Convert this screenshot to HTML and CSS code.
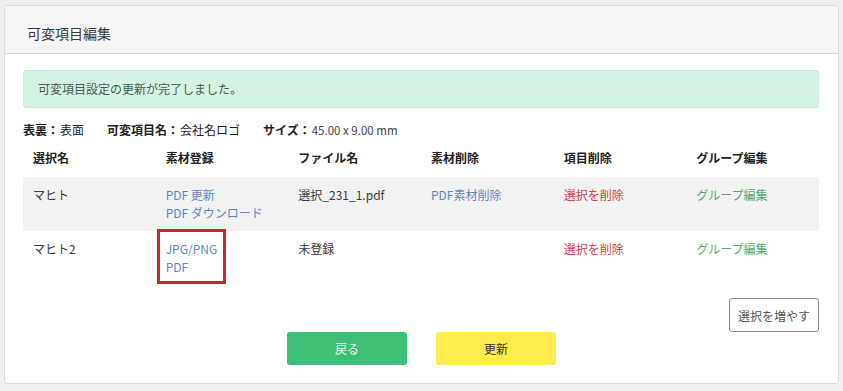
FILE: index.html
```html
<!DOCTYPE html>
<html lang="ja">
<head>
<meta charset="utf-8">
<title>可変項目編集</title>
<link rel="stylesheet" href="styles.css">
</head>
<body>
<div class="card">
  <div class="card-header">可変項目編集</div>
  <div class="card-body">
    <div class="alert">可変項目設定の更新が完了しました。</div>
    <div class="info">
      <span class="info-item"><b>表裏：</b>表面</span>
      <span class="info-item"><b>可変項目名：</b>会社名ロゴ</span>
      <span class="info-item"><b>サイズ：</b><span class="size">45.00 x 9.00 mm</span></span>
    </div>
    <table class="items">
      <thead>
        <tr>
          <th>選択名</th>
          <th>素材登録</th>
          <th>ファイル名</th>
          <th>素材削除</th>
          <th>項目削除</th>
          <th>グループ編集</th>
        </tr>
      </thead>
      <tbody>
        <tr class="striped">
          <td>マヒト</td>
          <td><a class="link">PDF 更新</a><br><a class="link">PDF ダウンロード</a></td>
          <td>選択_231_1.pdf</td>
          <td><a class="link">PDF素材削除</a></td>
          <td><a class="danger">選択を削除</a></td>
          <td><a class="success">グループ編集</a></td>
        </tr>
        <tr>
          <td>マヒト2</td>
          <td class="marked"><a class="link">JPG/PNG</a><br><a class="link">PDF</a><span class="highlight"></span></td>
          <td>未登録</td>
          <td></td>
          <td><a class="danger">選択を削除</a></td>
          <td><a class="success">グループ編集</a></td>
        </tr>
      </tbody>
    </table>
    <div class="add-row">
      <button class="btn-outline">選択を増やす</button>
    </div>
    <div class="actions">
      <button class="btn btn-back">戻る</button>
      <button class="btn btn-update">更新</button>
    </div>
  </div>
</div>
</body>
</html>
```

FILE: styles.css
```css
* { box-sizing: border-box; }
html, body {
  margin: 0;
  padding: 0;
  background: #efefef;
}
body {
  padding: 5px 4px 0 4px;
  font-family: "Noto Sans CJK JP", "Noto Sans", sans-serif;
  font-size: 12px;
  line-height: 18px;
  color: #3a3a3a;
}
.card {
  width: 835px;
  background: #fff;
  border: 1px solid #dcdcdc;
  border-radius: 3px;
}
.card-header {
  background: #f5f5f5;
  border-bottom: 1px solid #d8d8d8;
  padding: 17px 22px 10px 22px;
  font-size: 14px;
  line-height: 20px;
  color: #3a3a3a;
}
.card-body {
  padding: 16px 19px 18px 18px;
}
.alert {
  background: #d5f2e3;
  border: 1px solid #c6ebd7;
  border-radius: 3px;
  padding: 9px 14px;
  color: #4b5a52;
  line-height: 18px;
}
.info {
  margin-top: 13px;
  display: flex;
  color: #222;
}
.info-item { margin-right: 23px; }
.info-item b { font-weight: 700; margin-right: 1px; }
.size { font-size: 11.5px; color: #444; }
.items {
  width: 796px;
  border-collapse: collapse;
  table-layout: fixed;
}
.items th {
  text-align: left;
  font-weight: 700;
  padding: 10px 10px;
  color: #222;
}
.items td {
  padding: 9px 10px;
  vertical-align: top;
  color: #3a3a3a;
}
.items tr.striped td { background: #f2f2f2; }
.link { color: #6089c4; }
.danger { color: #cc4444; }
.success { color: #55ab70; }
.marked { position: relative; }
.highlight {
  position: absolute;
  left: 1px;
  top: -2px;
  width: 69px;
  height: 55px;
  border: 3px solid #c9252d;
}
.add-row {
  margin-top: 13px;
  display: flex;
  justify-content: flex-end;
  width: 796px;
}
.btn-outline {
  width: 90px;
  height: 34px;
  background: #fff;
  border: 1px solid #8a8a8a;
  border-radius: 3px;
  font-family: inherit;
  font-size: 12px;
  color: #555;
  padding: 0;
}
.actions {
  display: flex;
  justify-content: center;
  gap: 29px;
  padding-left: 1px;
}
.btn {
  width: 120px;
  height: 33px;
  border: none;
  border-radius: 3px;
  font-family: inherit;
  font-size: 12px;
  padding: 0;
}
.btn-back { background: #3ebf76; color: #eafff1; }
.btn-update { background: #ffeb4b; color: #333; }
```
